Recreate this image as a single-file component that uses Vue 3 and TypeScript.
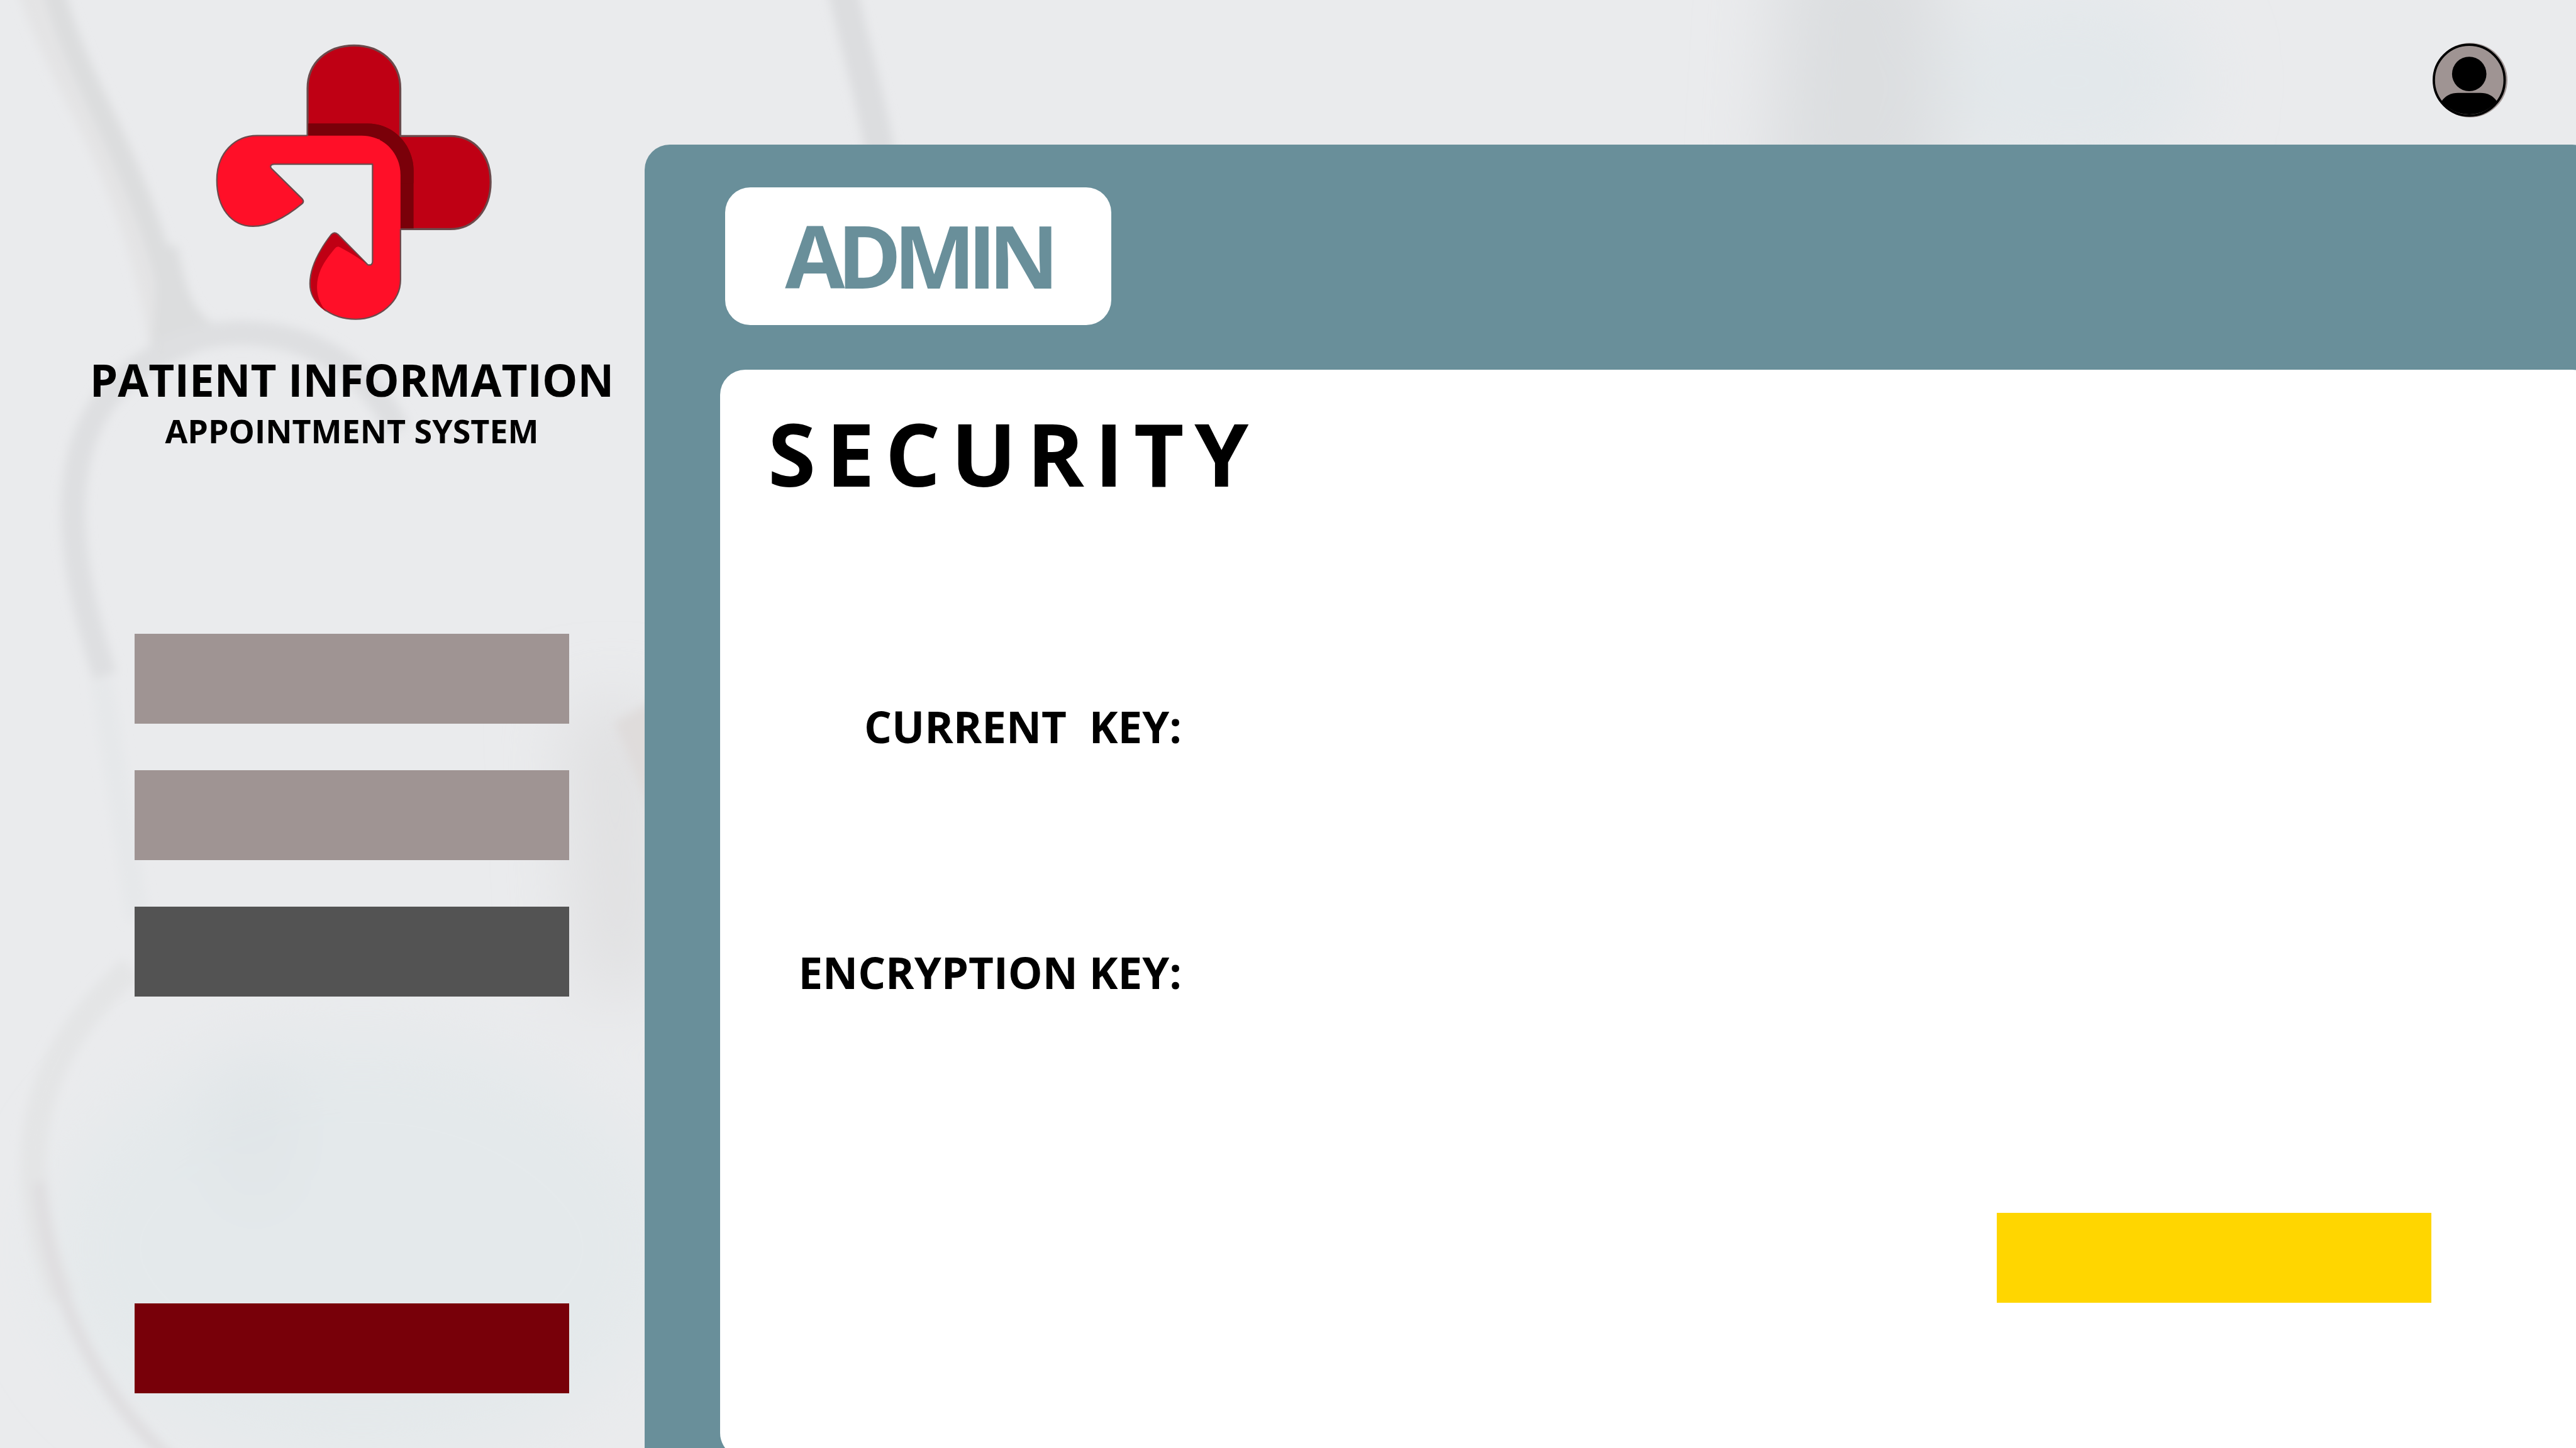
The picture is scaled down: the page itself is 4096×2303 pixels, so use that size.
<script setup lang="ts">
import { ref } from 'vue'

interface NavItem {
  id: string
  label: string
}

const navItems: NavItem[] = [
  { id: 'first', label: 'First section' },
  { id: 'second', label: 'Second section' },
  { id: 'security', label: 'Security' },
]

const activeItem = ref<string>('security')
const currentKey = ref<string>('')
const encryptionKey = ref<string>('')
</script>

<template>
  <div class="page">
    <svg class="backdrop" viewBox="0 0 1568 882" preserveAspectRatio="xMidYMid slice" aria-hidden="true">
      <defs>
        <filter id="soft" x="-20%" y="-20%" width="140%" height="140%"><feGaussianBlur stdDeviation="3" /></filter>
        <filter id="haze" x="-50%" y="-50%" width="200%" height="200%"><feGaussianBlur stdDeviation="22" /></filter>
      </defs>
      <rect width="1568" height="882" fill="#eaebed" />
      <g filter="url(#haze)">
        <ellipse cx="220" cy="760" rx="190" ry="130" fill="#e4e9eb" />
        <path d="M345 430 L400 430 L400 600 L355 610 Z" fill="#dfdfe0" />
        <path d="M1085 -40 L1180 -40 L1185 130 L1075 130 Z" fill="#dcdee0" />
        <ellipse cx="1260" cy="50" rx="80" ry="60" fill="#e3e8eb" />
        <ellipse cx="155" cy="690" rx="20" ry="50" fill="#dfe4e7" />
      </g>
      <g filter="url(#soft)" fill="none" stroke="#dedfe1">
        <path d="M22 -10 C40 50 85 100 102 205" stroke-width="24" stroke="#e4e4e5" />
        <path d="M32 -10 C45 50 90 105 108 200" stroke-width="13" stroke="#dcddde" />
        <path d="M94 150 L108 150 C114 180 118 200 150 203 C125 212 100 222 84 232 C94 210 96 190 94 150 Z" fill="#dcddde" stroke="none" />
        <path d="M98 214 C150 190 215 205 242 262" stroke-width="15" />
        <path d="M98 216 C40 245 30 310 64 412" stroke-width="15" />
        <path d="M512 -10 C518 20 528 50 536 95" stroke-width="18" stroke="#dcdddf" />
        <path d="M62 415 L84 560" stroke-width="14" stroke="#e6e8ea" />
        <path d="M80 590 C10 650 10 720 38 790" stroke-width="16" stroke="#e4e5e6" />
        <path d="M24 720 C30 790 60 850 105 890" stroke-width="8" stroke="#dfdee0" />
        <path d="M374 440 L400 425 L400 505 Z" fill="#dfdcdb" stroke="none" />
      </g>
    </svg>

    <aside class="sidebar">
      <svg class="logo" viewBox="0 0 1560 1500" role="img" aria-label="Patient Information Appointment System">
        <g stroke="#6b4a4c" stroke-width="10" stroke-linejoin="round">
          <path d="M541 560 V290 C541 160 640 76 772 76 C904 76 1002 160 1002 290 V526 H1250 C1370 526 1451 620 1451 755 C1451 890 1370 989 1250 989 H900 V560 Z" fill="#bf0014" />
        </g>
        <path d="M545 464 H840 C970 464 1068 570 1068 700 V985 H980 V540 H545 Z" fill="#7a0009" />
        <path d="M545 464 H840 C970 464 1068 570 1068 700 V760 H900 V540 H545 Z" fill="#7a0009" />
        <path
          d="M290 524 H810 C920 524 1003 610 1003 720 V1240 C1003 1350 900 1437 780 1437 C660 1437 553 1360 553 1260 C553 1170 610 1080 660 1015 Q675 1000 692 1015 L840 1166 Q864 1172 864 1150 V666 H375 Q350 668 360 686 L514 838 Q526 852 514 862 C450 915 360 975 270 975 C160 975 90 880 90 745 C90 610 180 524 290 524 Z"
          fill="#ff0f28"
        />
        <path
          d="M541 524 H290 C180 524 90 610 90 745 C90 880 160 975 270 975 C360 975 450 915 514 862 Q526 852 514 838 L360 686 Q350 668 375 666 H864 V1150 Q864 1172 840 1166 L692 1015 Q675 1000 660 1015 C610 1080 553 1170 553 1260 C553 1360 660 1437 780 1437 C900 1437 1003 1350 1003 1240 V989"
          fill="none"
          stroke="#6b4a4c"
          stroke-width="7"
          stroke-linejoin="round"
        />
        <path d="M660 1018 Q675 1004 690 1018 L832 1160 C780 1120 740 1100 700 1078 Q688 1072 676 1086 C630 1140 588 1200 588 1275 C588 1330 610 1370 634 1400 C585 1365 557 1320 557 1260 C557 1170 610 1084 660 1018 Z" fill="#bf0014" />
      </svg>
      <h1 class="brand">PATIENT INFORMATION</h1>
      <p class="tagline">APPOINTMENT SYSTEM</p>

      <nav class="nav" aria-label="Main">
        <button
          v-for="item in navItems"
          :key="item.id"
          type="button"
          class="bar"
          :class="{ active: item.id === activeItem }"
          :aria-label="item.label"
          @click="activeItem = item.id"
        ></button>
      </nav>

      <button type="button" class="bar logout" aria-label="Log out"></button>
    </aside>

    <main class="main">
      <header class="topbar">
        <button type="button" class="avatar" aria-label="Account">
          <svg viewBox="153 93 374 372" aria-hidden="true">
            <circle cx="341" cy="279" r="186" fill="#9f9493" />
            <circle cx="336" cy="279" r="177" fill="#9f9493" stroke="#000" stroke-width="12" />
            <circle cx="336" cy="248" r="86" />
            <path d="M198 384 Q228 343 280 343 H392 Q444 343 474 384 A177 177 0 0 1 198 384 Z" />
          </svg>
        </button>
      </header>

      <div class="workspace">
        <div class="badge">ADMIN</div>
        <section class="card">
          <h2 class="title">SECURITY</h2>
          <form class="form" @submit.prevent>
            <div class="row">
              <label for="current-key">CURRENT&nbsp; KEY:</label>
              <input id="current-key" v-model="currentKey" type="text" />
            </div>
            <div class="row">
              <label for="encryption-key">ENCRYPTION KEY:</label>
              <input id="encryption-key" v-model="encryptionKey" type="text" />
            </div>
            <button type="submit" class="bar save" aria-label="Save"></button>
          </form>
        </section>
      </div>
    </main>
  </div>
</template>

<style>
body {
  margin: 0;
}
</style>

<style scoped>
.page {
  position: relative;
  display: grid;
  grid-template-columns: 1025px minmax(0, 1fr);
  min-height: 100vh;
  overflow: hidden;
  background: #eaebed;
  color: #000;
  font-family: "Open Sans", "Noto Sans", sans-serif;
  font-weight: 700;
}

.backdrop {
  position: absolute;
  inset: 0;
  width: 100%;
  height: 100%;
}

.sidebar {
  position: relative;
  display: flex;
  flex-direction: column;
  align-items: center;
  padding: 48px 0 87px 94px;
}

.logo {
  width: 499px;
  height: 480px;
  margin-left: 12px;
}

.brand {
  margin: 36px 0 0;
  font-size: 71px;
  font-weight: 700;
  line-height: 80px;
  white-space: nowrap;
}

.tagline {
  margin: 11px 0 0;
  font-size: 52px;
  line-height: 60px;
  white-space: nowrap;
}

.nav {
  display: flex;
  flex-direction: column;
  gap: 74px;
  margin-top: 293px;
}

.bar {
  display: block;
  width: 691px;
  height: 143px;
  padding: 0;
  border: 0;
  background: #9f9493;
  cursor: pointer;
}

.bar.active {
  background: #535353;
}

.bar.logout {
  margin-top: auto;
  background: #780009;
}

.bar.save {
  align-self: flex-end;
  margin-top: 64px;
  background: #ffd600;
}

.main {
  position: relative;
  display: flex;
  flex-direction: column;
}

.topbar {
  display: flex;
  justify-content: flex-end;
  align-items: flex-start;
  height: 230px;
  padding: 68px 109px 0 0;
  box-sizing: border-box;
}

.avatar {
  width: 119px;
  height: 119px;
  padding: 0;
  border: 0;
  border-radius: 50%;
  background: none;
  cursor: pointer;
}

.avatar svg {
  display: block;
  width: 100%;
  height: 100%;
}

.workspace {
  display: flex;
  flex: 1;
  flex-direction: column;
  align-items: stretch;
  margin-right: -34px;
  padding: 68px 0 0 120px;
  border-radius: 40px 40px 0 0;
  background: #698f9a;
}

.badge {
  display: flex;
  align-self: flex-start;
  align-items: center;
  justify-content: center;
  width: 614px;
  height: 219px;
  margin-left: 8px;
  padding-bottom: 6px;
  border-radius: 40px;
  box-sizing: border-box;
  background: #fff;
  color: #698f9a;
  font-size: 138px;
  line-height: 160px;
  letter-spacing: -0.09em;
}

.card {
  flex: 1;
  margin: 71px 0 -16px;
  padding: 52px 264px 0 76px;
  border-radius: 40px;
  background: #fff;
}

.title {
  margin: 0;
  font-size: 138px;
  font-weight: 700;
  line-height: 160px;
  letter-spacing: 0.12em;
}

.form {
  display: flex;
  flex-direction: column;
  gap: 248px;
  margin-top: 283px;
}

.row {
  display: grid;
  grid-template-columns: 658px minmax(0, 1fr);
  gap: 40px;
  align-items: center;
  height: 143px;
}

.row label {
  font-size: 69px;
  line-height: 80px;
  text-align: right;
  white-space: nowrap;
}

.row input {
  width: 100%;
  height: 100%;
  padding: 0 32px;
  border: 0;
  box-sizing: border-box;
  background: transparent;
  font: inherit;
  font-size: 69px;
}
</style>
